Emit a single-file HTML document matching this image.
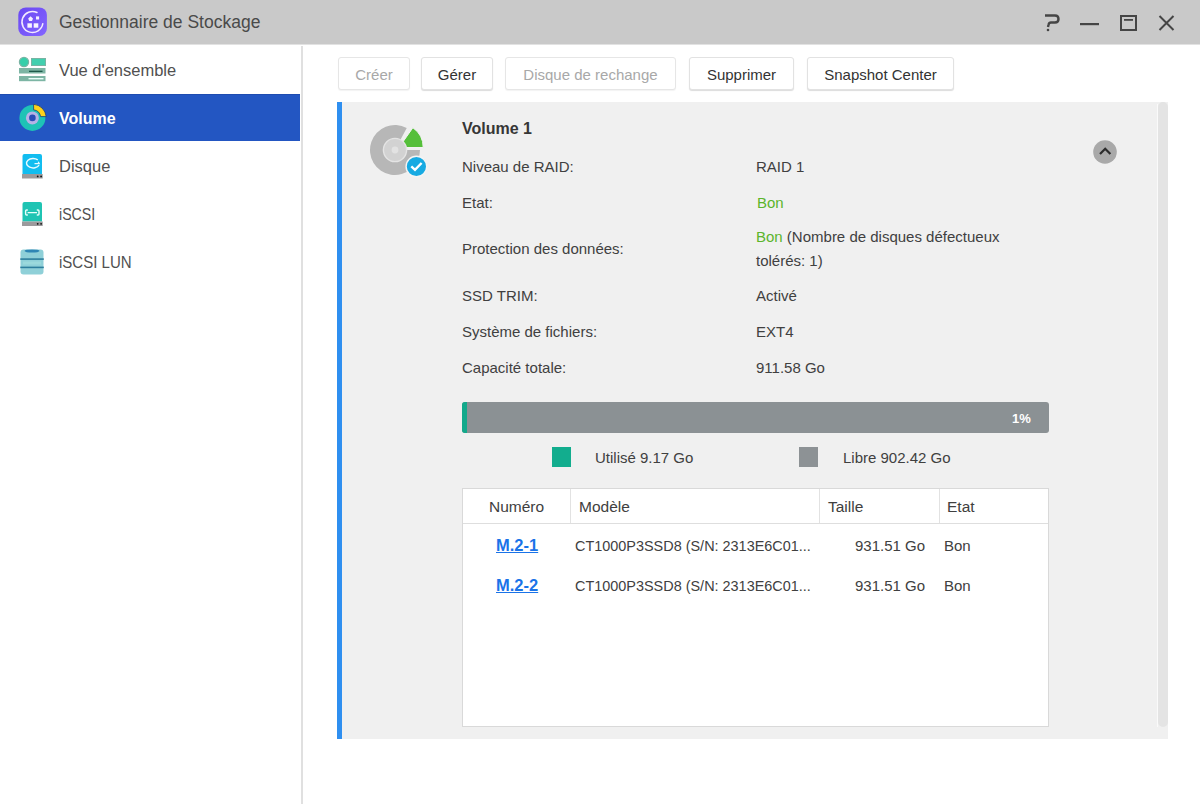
<!DOCTYPE html>
<html><head><meta charset="utf-8">
<style>
*{margin:0;padding:0;box-sizing:border-box}
html,body{width:1200px;height:804px;overflow:hidden;background:#fff;font-family:"Liberation Sans",sans-serif;position:relative}
.a{position:absolute;white-space:nowrap}
#title{left:0;top:0;width:1200px;height:44px;background:#c9c9c9}
#sidebar{left:301px;top:46px;width:2px;height:758px;background:#e0e0e0}
#tline{left:0;top:44px;width:1200px;height:1px;background:#e2e2e2}
.navsel{left:0;top:94px;width:300px;height:47px;background:#2356c2;border-top:1px solid #1f4cb0}
.nav{font-size:16.5px;color:#505050;line-height:20px}
.btn{height:33px;top:57px;border:1px solid #e2e2e2;border-radius:3px;background:#fff;box-shadow:0 1px 1px rgba(0,0,0,0.14);font-size:15px;line-height:33px;text-align:center;color:#333}
.btn.dis{color:#a8a8a8;border-color:#e6e6e6;box-shadow:0 1px 1px rgba(0,0,0,0.05)}
#panel{left:337px;top:102px;width:831px;height:637px;background:#f0f0f0}
#bluebar{left:337px;top:102px;width:5px;height:637px;background:#2f8ff0}
#scroll{left:1158px;top:102px;width:10px;height:625px;background:#e4e4e4;border-radius:5px}
#scrollw{left:1157px;top:104px;width:1px;height:623px;background:#fafafa}
.t{font-size:15px;line-height:20px;color:#404040}
.g{color:#5bb52c}
#bar{left:462px;top:402px;width:587px;height:31px;background:#8b9194;border-radius:3px;overflow:hidden}
#table{left:462px;top:488px;width:587px;height:239px;background:#fff;border:1px solid #d9d9d9}
.hd{font-size:15.5px;line-height:20px;color:#404040}
.lnk{font-size:16.5px;font-weight:bold;color:#1a73e8;text-decoration:underline;text-underline-offset:1px;text-decoration-thickness:1.4px;line-height:20px}
</style></head><body>

<div class="a" id="title"></div>
<div class="a" id="tline"></div>
<!-- app icon -->
<svg class="a" style="left:14px;top:4px" width="36" height="36" viewBox="14 4 36 36">
  <defs><linearGradient id="pg" x1="0" y1="0" x2="1" y2="1"><stop offset="0" stop-color="#6a48f2"/><stop offset="1" stop-color="#8466ff"/></linearGradient></defs>
  <rect x="18.3" y="7.4" width="28.6" height="28.6" rx="7.5" fill="url(#pg)"/>
  <path d="M37 12.5 A10.5 10.5 0 1 0 42.8 23.7" fill="none" stroke="#f3eaff" stroke-width="1.5" stroke-linecap="round"/>
  <path d="M30.6 16.2 L33 18.4 L32 20.9 L29.2 20.9 L28.2 18.4 Z" fill="#f6f0ff"/>
  <rect x="36" y="16.4" width="3.1" height="3.1" fill="#f6f0ff"/>
  <rect x="27.4" y="23.3" width="4.5" height="4.4" fill="#f8f4ff"/>
  <rect x="33.7" y="23.3" width="4.6" height="4.4" fill="#f8f4ff"/>
</svg>
<div class="a" style="left:59px;top:10px;font-size:17.5px;line-height:24px;color:#4a4a4a">Gestionnaire de Stockage</div>

<!-- window controls -->
<svg class="a" style="left:1040px;top:10px" width="140" height="26" viewBox="1040 10 140 26">
  <path d="M1045 15.5 H1055 Q1058.5 15.5 1058.5 19 Q1058.5 22.5 1055 22.5 H1051 Q1049 22.5 1048.6 24.5 L1048 27" fill="none" stroke="#454545" stroke-width="2.4"/>
  <circle cx="1048" cy="30" r="1.3" fill="#454545"/>
  <rect x="1080" y="23" width="19" height="2.2" fill="#454545"/>
  <rect x="1121" y="16" width="15" height="14" fill="none" stroke="#454545" stroke-width="2"/>
  <rect x="1124" y="19" width="9" height="1.8" fill="#454545"/>
  <path d="M1159.5 16 L1173.5 30 M1173.5 16 L1159.5 30" stroke="#454545" stroke-width="2"/>
</svg>

<div class="a" id="sidebar"></div>
<div class="a navsel"></div>

<!-- nav icons -->
<svg class="a" style="left:18px;top:56px" width="30" height="28" viewBox="18 56 30 28">
  <circle cx="24" cy="62" r="4.6" fill="#35cfaa" stroke="#79b3a3" stroke-width="1.2"/>
  <rect x="31.5" y="58.5" width="14" height="7" fill="#42cfae" stroke="#79b3a3" stroke-width="1"/>
  <rect x="19" y="68" width="26.5" height="5.5" fill="#7db5a4"/>
  <rect x="29" y="70.7" width="13.5" height="1.3" fill="#1d5a4a"/>
  <rect x="19" y="76" width="26.5" height="5.2" fill="#7db5a4"/>
  <rect x="28.5" y="78" width="15" height="1.4" fill="#e8fffa"/>
</svg>
<div class="a nav" style="left:59px;top:60px">Vue d'ensemble</div>

<svg class="a" style="left:18px;top:103px" width="30" height="30" viewBox="18 103 30 30">
  <circle cx="32.4" cy="117.9" r="13" fill="#1ec3b6"/>
  <path d="M33.6 104.3 A13.6 13.6 0 0 1 46.2 116.6 L40.6 116.6 A8.2 8.2 0 0 0 33.6 109.8 Z" fill="#ffd21a" stroke="#173c7c" stroke-width="0.8"/>
  <circle cx="32.4" cy="117.9" r="6.5" fill="#b6b2e6"/>
  <circle cx="32.4" cy="117.9" r="3.3" fill="#2a4db6"/>
</svg>
<div class="a nav" style="left:59px;top:109px;color:#fff;font-weight:bold;font-size:16px">Volume</div>

<svg class="a" style="left:20px;top:152px" width="26" height="28" viewBox="20 152 26 28">
  <path d="M22.5 156 Q22.5 154 24.5 154 H40 Q42 154 42 156 V174 H22.5 Z" fill="#12bdf0"/>
  <rect x="22" y="174" width="20.7" height="4.5" fill="#9c9a9c"/>
  <circle cx="37.7" cy="176.4" r="0.9" fill="#111"/>
  <circle cx="41.1" cy="176.4" r="0.9" fill="#111"/>
  <path d="M37.8 159.9 A6.6 4.7 0 1 0 39.1 165.2" fill="none" stroke="#e8fbff" stroke-width="1.4"/>
  <path d="M34.5 163.6 H39.2 L38.2 161.8" fill="none" stroke="#e8fbff" stroke-width="1.3"/>
</svg>
<div class="a nav" style="left:59px;top:156px">Disque</div>

<svg class="a" style="left:20px;top:200px" width="26" height="28" viewBox="20 200 26 28">
  <path d="M22.5 204 Q22.5 202 24.5 202 H40 Q42 202 42 204 V221.5 H22.5 Z" fill="#1fc4b3"/>
  <rect x="22" y="221.5" width="20.7" height="4.5" fill="#9c9a9c"/>
  <circle cx="37.7" cy="223.8" r="0.9" fill="#111"/>
  <circle cx="41.1" cy="223.8" r="0.9" fill="#111"/>
  <path d="M27.8 210 H26.6 Q25.6 210 25.6 211 V214 Q25.6 215 26.6 215 H27.8 M36.8 210 H38 Q39 210 39 211 V214 Q39 215 38 215 H36.8 M27.6 212.6 H37" fill="none" stroke="#e8fffb" stroke-width="1.4"/>
</svg>
<div class="a nav" style="left:59px;top:204px;transform:scaleX(0.86);transform-origin:0 0">iSCSI</div>

<svg class="a" style="left:19px;top:247px" width="27" height="29" viewBox="19 247 27 29">
  <rect x="20.5" y="249.5" width="23" height="25" rx="3" fill="#8fd0d8"/>
  <ellipse cx="32" cy="251" rx="7.5" ry="1.6" fill="#2f86b4"/>
  <rect x="20.3" y="258.3" width="23.5" height="1.6" fill="#2e7f9e"/>
  <rect x="20.3" y="266.6" width="23.5" height="1.6" fill="#2e7f9e"/>
  <rect x="23" y="261.5" width="18" height="3" fill="#a4e0e0" opacity="0.6"/>
</svg>
<div class="a nav" style="left:59px;top:252px;transform:scaleX(0.91);transform-origin:0 0">iSCSI LUN</div>

<!-- toolbar -->
<div class="a btn dis" style="left:338px;width:72px">Créer</div>
<div class="a btn" style="left:421px;width:72px">Gérer</div>
<div class="a btn dis" style="left:505px;width:171px">Disque de rechange</div>
<div class="a btn" style="left:689px;width:105px">Supprimer</div>
<div class="a btn" style="left:807px;width:147px">Snapshot Center</div>

<!-- panel -->
<div class="a" id="panel"></div>
<div class="a" id="bluebar"></div>
<div class="a" id="scrollw"></div>
<div class="a" id="scroll"></div>

<!-- volume icon -->
<svg class="a" style="left:365px;top:120px" width="64" height="60" viewBox="365 120 64 60">
  <path d="M395 150 L406.74 127.93 A25 25 0 1 0 420 150 Z" fill="#b7b7b7"/>
  <path d="M399 147.5 L412.88 127.68 A24.2 24.2 0 0 1 423.2 147.5 Z" fill="#55bf3a" stroke="#f2f2f2" stroke-width="1"/>
  <circle cx="395" cy="150" r="11.6" fill="#d2d2d2" stroke="#e4e4e4" stroke-width="1.4"/>
  <circle cx="395" cy="150" r="3.4" fill="#e2e2e2"/>
  <circle cx="416.4" cy="166.5" r="10.3" fill="#17aae2" stroke="#f4f4f4" stroke-width="1.4"/>
  <path d="M411.3 166.3 L415 169.8 L421.6 163" fill="none" stroke="#fff" stroke-width="2.4"/>
</svg>

<div class="a t" style="left:462px;top:119px;font-weight:bold;font-size:16px;color:#363636">Volume 1</div>
<div class="a t" style="left:462px;top:157px">Niveau de RAID:</div>
<div class="a t" style="left:756px;top:157px">RAID 1</div>
<div class="a t" style="left:462px;top:193px">Etat:</div>
<div class="a t g" style="left:757px;top:193px">Bon</div>
<div class="a t" style="left:462px;top:239px">Protection des données:</div>
<div class="a t" style="left:756px;top:227px"><span class="g">Bon</span> (Nombre de disques défectueux</div>
<div class="a t" style="left:756px;top:251px">tolérés: 1)</div>
<div class="a t" style="left:462px;top:286px">SSD TRIM:</div>
<div class="a t" style="left:756px;top:286px">Activé</div>
<div class="a t" style="left:462px;top:322px">Système de fichiers:</div>
<div class="a t" style="left:756px;top:322px">EXT4</div>
<div class="a t" style="left:462px;top:358px">Capacité totale:</div>
<div class="a t" style="left:756px;top:358px">911.58 Go</div>

<!-- chevron -->
<svg class="a" style="left:1093px;top:140px" width="24" height="24" viewBox="1093 140 24 24">
  <circle cx="1105" cy="152" r="11.8" fill="#a9a9a9"/>
  <path d="M1100 154 L1105.2 148.8 L1110.4 154" fill="none" stroke="#2b2b2b" stroke-width="2.2"/>
</svg>

<!-- progress -->
<div class="a" id="bar"><div style="position:absolute;left:0;top:0;width:5px;height:31px;background:#12a98b"></div></div>
<div class="a" style="left:1012px;top:410px;font-size:13px;font-weight:bold;color:#fff;line-height:18px">1%</div>
<div class="a" style="left:552px;top:447px;width:19px;height:20px;background:#12ad8e"></div>
<div class="a t" style="left:595px;top:448px">Utilisé 9.17 Go</div>
<div class="a" style="left:799px;top:447px;width:19px;height:20px;background:#8d9295"></div>
<div class="a t" style="left:843px;top:448px">Libre 902.42 Go</div>

<!-- table -->
<div class="a" id="table"></div>
<div class="a" style="left:463px;top:523px;width:585px;height:1px;background:#dedede"></div>
<div class="a" style="left:570px;top:489px;width:1px;height:34px;background:#e2e2e2"></div>
<div class="a" style="left:819px;top:489px;width:1px;height:34px;background:#e2e2e2"></div>
<div class="a" style="left:939px;top:489px;width:1px;height:34px;background:#e2e2e2"></div>
<div class="a hd" style="left:489px;top:497px">Numéro</div>
<div class="a hd" style="left:579px;top:497px">Modèle</div>
<div class="a hd" style="left:828px;top:497px">Taille</div>
<div class="a hd" style="left:947px;top:497px">Etat</div>

<div class="a lnk" style="left:496px;top:535px">M.2-1</div>
<div class="a t" style="left:575px;top:536px;transform:scaleX(0.962);transform-origin:0 0">CT1000P3SSD8 (S/N: 2313E6C01...</div>
<div class="a t" style="left:855px;top:536px">931.51 Go</div>
<div class="a t" style="left:944px;top:536px">Bon</div>
<div class="a lnk" style="left:496px;top:575px">M.2-2</div>
<div class="a t" style="left:575px;top:576px;transform:scaleX(0.962);transform-origin:0 0">CT1000P3SSD8 (S/N: 2313E6C01...</div>
<div class="a t" style="left:855px;top:576px">931.51 Go</div>
<div class="a t" style="left:944px;top:576px">Bon</div>

</body></html>
